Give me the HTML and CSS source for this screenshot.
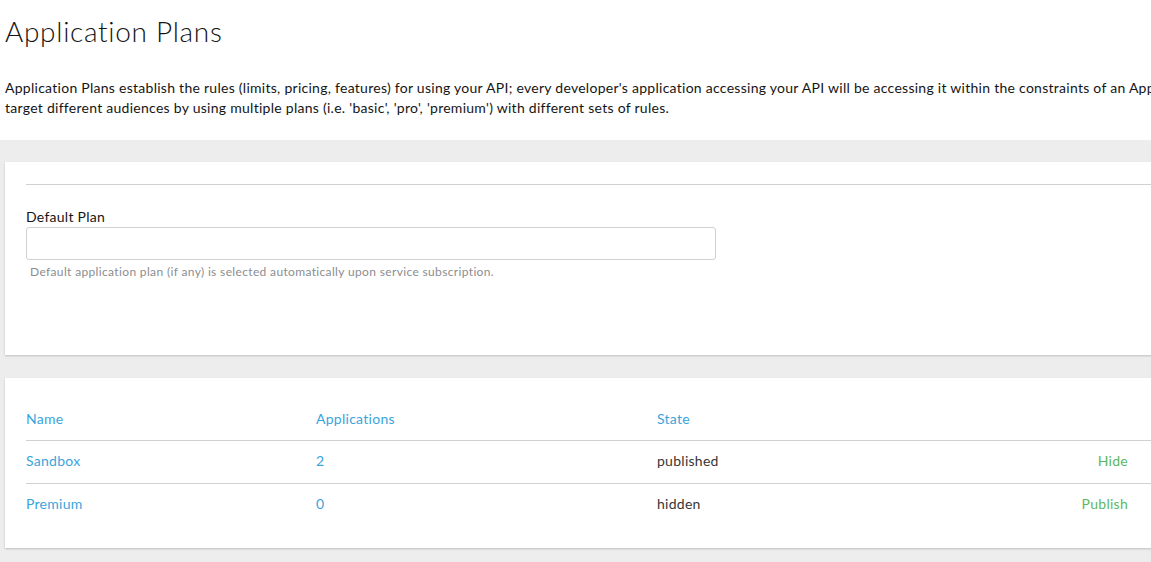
FILE: index.html
```html
<!DOCTYPE html>
<html lang="en">
<head>
<meta charset="utf-8">
<title>Application Plans</title>
<link rel="stylesheet" href="styles.css">
</head>
<body>
<div class="page">
  <header class="page-header">
    <h1 class="page-title">Application Plans</h1>
    <p class="page-intro">Application Plans establish the rules (limits, pricing, features) for using your API; every developer's application accessing your API will be accessing it within the constraints of an Application Plan. From a business perspective, Application Plans allow you to<br>target different audiences by using multiple plans (i.e. 'basic', 'pro', 'premium') with different sets of rules.</p>
  </header>

  <main class="page-body">
    <section class="card card-form">
      <div class="card-rule"></div>
      <div class="field">
        <label class="field-label" for="default-plan">Default Plan</label>
        <input class="field-input" id="default-plan" type="text">
        <p class="field-help">Default application plan (if any) is selected automatically upon service subscription.</p>
      </div>
    </section>

    <section class="card card-table">
      <table class="plans">
        <thead>
          <tr>
            <th class="col-name"><a href="#">Name</a></th>
            <th class="col-apps"><a href="#">Applications</a></th>
            <th class="col-state"><a href="#">State</a></th>
            <th class="col-actions"></th>
          </tr>
        </thead>
        <tbody>
          <tr>
            <td class="col-name"><a href="#">Sandbox</a></td>
            <td class="col-apps"><a href="#">2</a></td>
            <td class="col-state">published</td>
            <td class="col-actions"><a class="action" href="#">Hide</a></td>
          </tr>
          <tr>
            <td class="col-name"><a href="#">Premium</a></td>
            <td class="col-apps"><a href="#">0</a></td>
            <td class="col-state">hidden</td>
            <td class="col-actions"><a class="action" href="#">Publish</a></td>
          </tr>
        </tbody>
      </table>
    </section>
  </main>
</div>
</body>
</html>
```

FILE: styles.css
```css
html, body {
  margin: 0;
  padding: 0;
  overflow: hidden;
  background: #ffffff;
}

body {
  font-family: "Lato", "Noto Sans", sans-serif;
  font-size: 14px;
  line-height: 20px;
  letter-spacing: 0.27px;
  color: #151515;
}

.page {
  width: 1176px;
}

.page-header {
  padding: 12px 5px 0 5px;
}

.page-title {
  margin: 0;
  font-family: "Lato", sans-serif;
  font-weight: 300;
  font-size: 28px;
  line-height: 38px;
  letter-spacing: 0.7px;
  color: #151515;
}

.page-intro {
  margin: 28px 0 22px 0;
  white-space: nowrap;
  color: #151515;
}

.page-body {
  background: #ededed;
  padding: 22px 0 14px 5px;
  display: flex;
  flex-direction: column;
  gap: 23px;
}

.card {
  background: #ffffff;
  box-shadow: 0 1px 2px rgba(3, 3, 3, 0.2);
  padding: 0 0 0 21px;
}

.card-form {
  height: 193px;
  box-sizing: border-box;
  padding-top: 22px;
}

.card-rule {
  border-top: 1px solid #d1d1d1;
}

.field {
  padding-top: 22px;
}

.field-label {
  display: block;
  line-height: 20px;
  color: #151515;
}

.field-input {
  display: block;
  box-sizing: border-box;
  width: 690px;
  height: 33px;
  margin: 0;
  border: 1px solid #d1d1d1;
  border-radius: 3px;
  background: #fff;
  font: inherit;
}

.field-help {
  margin: 4px 0 0 4px;
  font-size: 12px;
  line-height: 16px;
  letter-spacing: 0.35px;
  color: #8b8d8f;
}

.card-table {
  padding-top: 20px;
  padding-bottom: 22px;
}

.plans {
  width: 100%;
  border-collapse: collapse;
}

.plans th,
.plans td {
  text-align: left;
  font-weight: 400;
  padding: 0;
  vertical-align: middle;
}

.plans td {
  padding-bottom: 2px;
}

.plans thead tr {
  height: 42px;
  border-bottom: 1px solid #d1d1d1;
}

.plans tbody tr {
  height: 43px;
}

.plans tbody tr + tr {
  border-top: 1px solid #d1d1d1;
}

.plans a {
  color: #39a5dc;
  text-decoration: none;
}

.col-name { width: 290px; }
.col-apps { width: 341px; }
.plans td.col-state { color: #363636; }

.plans .col-actions {
  text-align: right;
  padding-right: 48px;
}

.plans a.action {
  color: #5cb85c;
}
```
